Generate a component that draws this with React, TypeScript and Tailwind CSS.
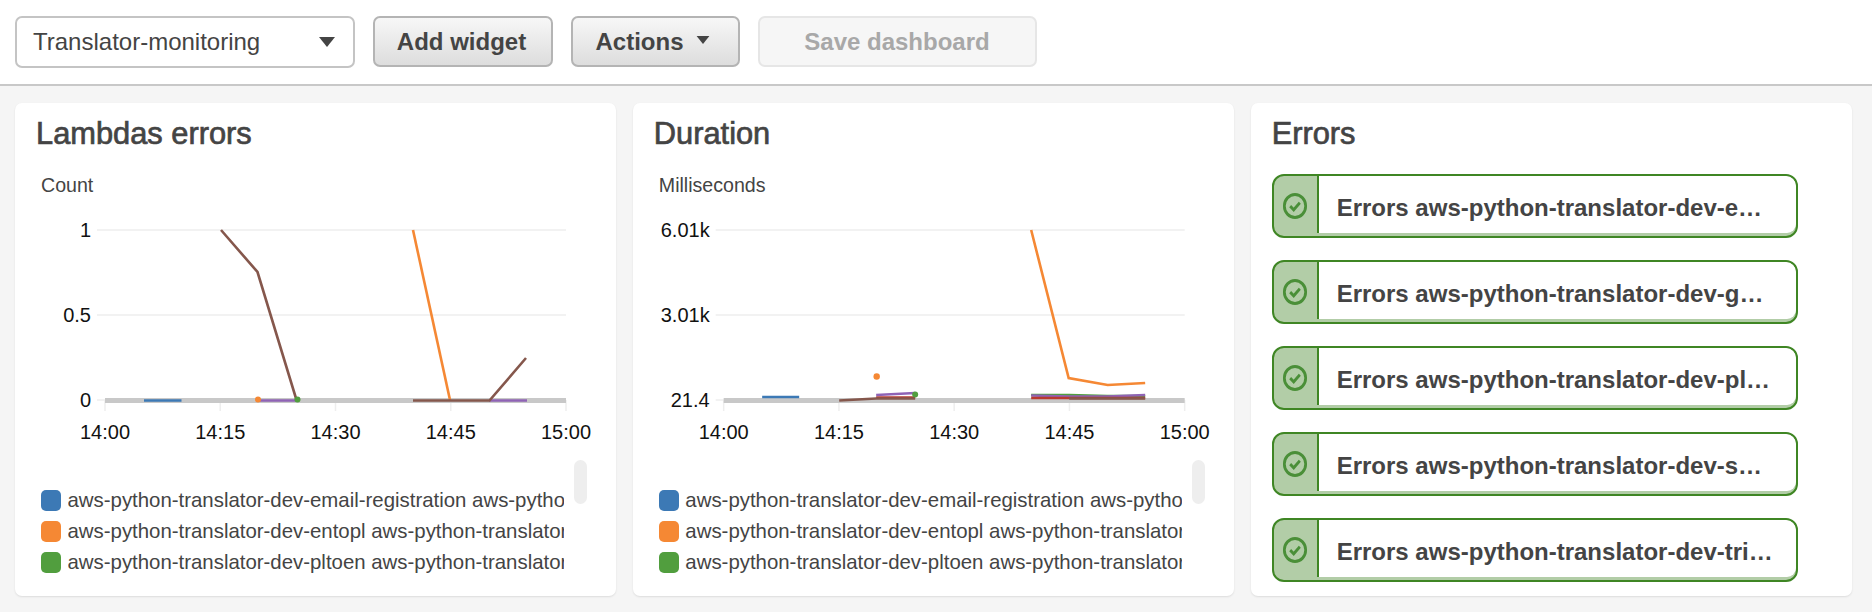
const FONT = "font-['Liberation_Sans',Arial,sans-serif]"

const BLUE = "#3c79b5"
const ORANGE = "#f58834"
const GREEN = "#519e3e"
const PURPLE = "#8f63b5"
const BROWN = "#85574c"
const RED = "#b9392f"

type Line = { color: string; points: string }
type Dot = { color: string; x: number; y: number; r: number }

type ChartProps = {
  originX: number
  axisX: number
  labelX: number
  yLabels: string[]
  lines: Line[]
  dots: Dot[]
}

const legendRows = [
  { color: BLUE, text: "aws-python-translator-dev-email-registration aws-python-translator-dev-gmail" },
  { color: ORANGE, text: "aws-python-translator-dev-entopl aws-python-translator-dev-gmail" },
  { color: GREEN, text: "aws-python-translator-dev-pltoen aws-python-translator-dev-send" },
]

const alarms = [
  "Errors aws-python-translator-dev-email-registration",
  "Errors aws-python-translator-dev-gmail-webhook",
  "Errors aws-python-translator-dev-pltoen-translation",
  "Errors aws-python-translator-dev-send-translation",
  "Errors aws-python-translator-dev-trigger-translation",
]

const errorsLines: Line[] = [
  { color: BLUE, points: "144,400.5 181.5,400.5" },
  { color: PURPLE, points: "258,400.5 297,400.5" },
  { color: PURPLE, points: "489,400.5 527,400.5" },
  { color: ORANGE, points: "413,230 450,400" },
  { color: BROWN, points: "221,230 257.5,272 296.5,400" },
  { color: BROWN, points: "413,400.5 489.5,400.5 526,358" },
]

const errorsDots: Dot[] = [
  { color: ORANGE, x: 258, y: 399.5, r: 3 },
  { color: GREEN, x: 297.5, y: 399.5, r: 3 },
]

const durationLines: Line[] = [
  { color: BLUE, points: "762,397 799,397" },
  { color: ORANGE, points: "1031,230 1068.5,378 1107.5,385 1145,383" },
  { color: RED, points: "876,397.5 915,397.5" },
  { color: PURPLE, points: "876,395 915,393" },
  { color: BROWN, points: "839,400.5 876,398.5 915,398.5" },
  { color: GREEN, points: "1031,395 1069,395 1107,396 1145,396" },
  { color: PURPLE, points: "1031,395.5 1069,396.5 1107,396.5 1145,395" },
  { color: RED, points: "1031,398 1145,398" },
  { color: BROWN, points: "1069,398.5 1145,398.5" },
]

const durationDots: Dot[] = [
  { color: ORANGE, x: 876.5, y: 376.5, r: 3.2 },
  { color: GREEN, x: 915, y: 394.5, r: 3 },
]

function Caret({ className }: { className: string }) {
  return (
    <svg viewBox="0 0 16 10" className={className}>
      <path d="M0 0h16L8 10z" fill="#444" />
    </svg>
  )
}

function Chart({ originX, axisX, labelX, yLabels, lines, dots }: ChartProps) {
  const step = 115.25
  const ticks = ["14:00", "14:15", "14:30", "14:45", "15:00"]
  const rows = [230, 315, 400]
  const gridLeft = axisX - 8
  const gridRight = axisX + step * 4

  return (
    <svg viewBox={`${originX} 197 575 288`} className="h-[288px] w-[575px] shrink-0">
      {rows.map((y) => (
        <line key={y} x1={gridLeft} x2={gridRight} y1={y} y2={y} stroke="#eeeeee" strokeWidth="1.5" />
      ))}
      {ticks.map((t, i) => (
        <g key={t}>
          <line
            x1={axisX + step * i}
            x2={axisX + step * i}
            y1="400"
            y2="411"
            stroke="#eeeeee"
            strokeWidth="1.5"
          />
          <text x={axisX + step * i} y="439" textAnchor="middle" fontSize="20" fill="#111">
            {t}
          </text>
        </g>
      ))}
      {yLabels.map((label, i) => (
        <text key={label} x={labelX} y={rows[i] + 6.5} textAnchor="end" fontSize="20" fill="#111">
          {label}
        </text>
      ))}
      <rect x={axisX} y="398" width={step * 4} height="5" fill="#c8c8c8" />
      {lines.map((l, i) => (
        <polyline key={i} points={l.points} fill="none" stroke={l.color} strokeWidth="2.6" />
      ))}
      {dots.map((d, i) => (
        <circle key={i} cx={d.x} cy={d.y} r={d.r} fill={d.color} />
      ))}
    </svg>
  )
}

function Legend() {
  return (
    <div className="relative w-[528px]">
      <div className="absolute -top-[25px] left-[538px] h-[44px] w-[13px] rounded-full bg-[#eeeeee]" />
      {legendRows.map((row) => (
        <div key={row.color} className="flex h-[31px] w-[528px] items-center pl-[5px]">
          <span className="h-[21px] w-[20px] shrink-0 rounded-[5px]" style={{ backgroundColor: row.color }} />
          <span className="ml-[6.5px] overflow-hidden whitespace-nowrap text-[20.4px] leading-[31px] text-[#444]">
            {row.text}
          </span>
        </div>
      ))}
    </div>
  )
}

function ChartCard({ title, unit, ...chart }: ChartProps & { title: string; unit: string }) {
  return (
    <section className="h-[493px] overflow-hidden rounded-[7px] bg-white pl-[21px] pt-[13px] shadow-[0_1px_2px_rgba(0,0,0,0.1)]">
      <h2 className="text-[30.8px] leading-[36px] text-[#444] [-webkit-text-stroke:0.7px_#444]">{title}</h2>
      <div className="mt-[21px] pl-[5px] text-[19.6px] leading-[24px] text-[#444]">{unit}</div>
      <Chart {...chart} />
      <Legend />
    </section>
  )
}

function AlarmRow({ label }: { label: string }) {
  return (
    <div className="flex h-[64px] w-[526px] overflow-hidden rounded-[12px] border-2 border-[#3f8624] bg-[#b2cda7]">
      <div className="flex w-[43px] shrink-0 items-center justify-center">
        <svg
          viewBox="0 0 28 28"
          preserveAspectRatio="none"
          className="h-[28px] w-[26px]"
          fill="none"
          stroke="#4a8f38"
          strokeWidth="3"
        >
          <circle cx="14" cy="14" r="11.5" />
          <path d="M8.8 14.2l3.8 3.6 6.6-7" />
        </svg>
      </div>
      <div className="mb-[3px] flex min-w-0 flex-1 items-center rounded-r-[9px] border-l-2 border-[#3f8624] bg-white pl-[18px] pt-[7px]">
        <span className="w-[438px] truncate text-[24px] font-bold text-[#444]">{label}</span>
      </div>
    </div>
  )
}

export default function App() {
  return (
    <div className={`${FONT} h-[612px] w-[1872px] overflow-hidden bg-[#f5f5f5]`}>
      <header className="flex h-[86px] items-start gap-[18px] border-b-2 border-[#c8c8c8] bg-white pl-[15px] pt-[16px]">
        <div className="flex h-[52px] w-[339.5px] items-center justify-between rounded-[7px] border-2 border-[#c4c4c4] bg-white pl-[16px] pr-[18px] text-[24px] text-[#444]">
          <span>Translator-monitoring</span>
          <Caret className="h-[10px] w-[16px]" />
        </div>
        <button className="flex h-[51px] w-[180px] items-center justify-center rounded-[7px] border-2 border-[#b4b4b4] bg-gradient-to-b from-[#f7f7f7] to-[#dddddd] pr-[2px] text-[24px] font-bold text-[#444]">
          Add widget
        </button>
        <button className="flex h-[51px] w-[169px] items-center justify-center gap-[12px] rounded-[7px] border-2 border-[#b4b4b4] bg-gradient-to-b from-[#f7f7f7] to-[#dddddd] pr-[5px] text-[24px] font-bold text-[#444]">
          Actions
          <Caret className="mb-[3px] h-[8px] w-[14px]" />
        </button>
        <button className="flex h-[51px] w-[279px] items-center justify-center rounded-[7px] border-2 border-[#e6e6e6] bg-[#f6f6f6] text-[24px] font-bold text-[#a8a8a8]">
          Save dashboard
        </button>
      </header>

      <main className="grid grid-cols-3 gap-[16.5px] pl-[15px] pr-[20px] pt-[17px]">
        <ChartCard
          title="Lambdas errors"
          unit="Count"
          originX={36}
          axisX={105}
          labelX={91}
          yLabels={["1", "0.5", "0"]}
          lines={errorsLines}
          dots={errorsDots}
        />
        <ChartCard
          title="Duration"
          unit="Milliseconds"
          originX={653.83}
          axisX={723.5}
          labelX={709.5}
          yLabels={["6.01k", "3.01k", "21.4"]}
          lines={durationLines}
          dots={durationDots}
        />
        <section className="h-[493px] rounded-[7px] bg-white pl-[21px] pt-[13px] shadow-[0_1px_2px_rgba(0,0,0,0.1)]">
          <h2 className="text-[30.8px] leading-[36px] text-[#444] [-webkit-text-stroke:0.7px_#444]">Errors</h2>
          <div className="mt-[22px] flex flex-col gap-[22px]">
            {alarms.map((label) => (
              <AlarmRow key={label} label={label} />
            ))}
          </div>
        </section>
      </main>
    </div>
  )
}
